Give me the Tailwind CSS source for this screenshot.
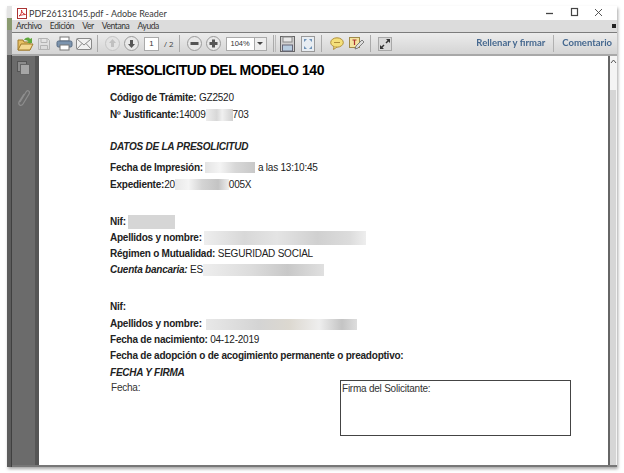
<!DOCTYPE html>
<html lang="es">
<head>
    <meta charset="UTF-8">
    <title>PDF26131045.pdf - Adobe Reader</title>
    <script src="https://cdn.jsdelivr.net/npm/@tailwindcss/browser@4"></script>
</head>
<body class="bg-white w-[624px] h-[473px] overflow-hidden font-['Liberation_Sans',Arial,sans-serif]">
    <div class="pt-[6px] pl-[7px]">
        <div class="w-[610px] h-[461px] flex shadow-[1px_2px_3px_rgba(0,0,0,0.35)] blur-[0.3px]">
            <!-- strip of the window behind -->
            <div class="w-[5px] flex flex-col">
                <div class="h-[12px] bg-[#e4e4e4]"></div>
                <div class="h-[12px] bg-[#8a9a70]"></div>
                <div class="h-[25px] bg-[#9a9a9a]"></div>
                <div class="flex-1 bg-[#5c5c5c] border-r border-[#404040]"></div>
            </div>

            <div class="flex-1 flex flex-col min-w-0">
                <!-- title bar -->
                <div class="h-[14px] bg-white flex items-center">
                    <svg class="ml-[5px]" width="10" height="11" viewBox="0 0 10 11"><rect x="0.5" y="0.5" width="9" height="10" fill="#fff" stroke="#a33"/><path d="M2 8c2-1 3-4 2.500-6 0 2 2 4 4 4.500-2 0-4.500.5-6.500 1.500z" fill="none" stroke="#c22" stroke-width="0.9"/></svg>
                    <span class="ml-[2px] text-[9px] leading-none text-[#3a3a3a] font-['Lato',sans-serif]">PDF26131045.pdf - Adobe Reader</span>
                    <svg class="ml-auto mr-[12px]" width="60" height="12" viewBox="0 0 60 12" fill="none" stroke="#444"><path d="M1 6.500h7" stroke-width="1.300"/><rect x="26.500" y="1.500" width="6" height="7" stroke-width="1.200"/><path d="M50 2l7 7M57 2l-7 7" stroke-width="0.900"/></svg>
                </div>
                <!-- menu bar -->
                <div class="h-[12px] bg-[#dcdcdc] flex items-center pl-[4px] gap-[8px] text-[8.500px] tracking-[-0.4px] leading-none text-[#333] font-['Lato',sans-serif] relative">
                    <span>Archivo</span><span>Edición</span><span>Ver</span><span>Ventana</span><span>Ayuda</span>
                    <span class="absolute right-[1px] top-[4px] w-[4px] h-[4px] bg-[#222]"></span>
                </div>
                <!-- toolbar -->
                <div class="h-[24px] flex items-center border-t border-[#7c7c7c] border-b-2 border-b-[#a8a8a8] bg-[linear-gradient(#ececec,#d4d4d4)]">
                    <svg class="ml-[5px]" width="17" height="16" viewBox="0 0 17 16"><path d="M1 4h5l1 2h6v8H1z" fill="#e8c064" stroke="#a07a2a"/><path d="M1 14l3-6h12l-3 6z" fill="#f4d890" stroke="#a07a2a"/><path d="M7 4c2-3 5-3 6-1l2-1v5h-5l1.500-1.500c-1-1.500-3-1.500-4.500-1.500z" fill="#5fa83c"/></svg>
                    <svg class="ml-[3px]" width="14" height="14" viewBox="0 0 14 14" fill="none" stroke="#b4b4b4"><path d="M1.500 1.500h9l2 2v9h-11z"/><path d="M4 1.500v4h6v-4M3.500 12.500v-4h7v4"/></svg>
                    <svg class="ml-[5px]" width="17" height="15" viewBox="0 0 17 15"><rect x="4" y="1" width="9" height="4" fill="#fff" stroke="#777"/><rect x="1" y="5" width="15" height="6" rx="1.500" fill="#7c94ae" stroke="#566a82"/><rect x="4" y="9" width="9" height="5" fill="#fff" stroke="#777"/></svg>
                    <svg class="ml-[3px]" width="16" height="12" viewBox="0 0 16 12" fill="#f2f2f2" stroke="#8a8a8a"><rect x="0.500" y="0.500" width="15" height="11" rx="1"/><path d="M1 1l7 6 7-6M1 11l5-5.500M15 11l-5-5.500" fill="none"/></svg>
                    <span class="ml-[5px] w-px h-[17px] bg-[#aaa]"></span>
                    <svg class="ml-[7px]" width="15" height="15" viewBox="0 0 15 15"><circle cx="7.500" cy="7.500" r="7" fill="#e2e2e2" stroke="#c4c4c4"/><path d="M7.500 3l3.500 4H9v4H6V7H4z" fill="#c0c0c0"/></svg>
                    <svg class="ml-[4px]" width="15" height="15" viewBox="0 0 15 15"><circle cx="7.500" cy="7.500" r="7" fill="#e8e8e8" stroke="#9a9a9a"/><path d="M7.500 12L4 8h2V4h3v4h2z" fill="#555"/></svg>
                    <span class="ml-[5px] w-[15px] h-[14px] bg-white border border-[#aaa] text-[8px] leading-[12px] text-center text-[#333]">1</span>
                    <span class="ml-[5px] text-[8px] text-[#444] font-['Open_Sans',sans-serif]">/ 2</span>
                    <span class="ml-[5px] w-px h-[17px] bg-[#aaa]"></span>
                    <svg class="ml-[7px]" width="15" height="15" viewBox="0 0 15 15"><circle cx="7.500" cy="7.500" r="7" fill="#e8e8e8" stroke="#9a9a9a"/><rect x="3.500" y="6" width="8" height="3" fill="#555"/></svg>
                    <svg class="ml-[4px]" width="15" height="15" viewBox="0 0 15 15"><circle cx="7.500" cy="7.500" r="7" fill="#e8e8e8" stroke="#9a9a9a"/><path d="M3.500 6H6V3.500h3V6h2.500v3H9v2.500H6V9H3.500z" fill="#555"/></svg>
                    <div class="ml-[5px] w-[41px] h-[14px] flex border border-[#aaa]">
                        <span class="w-[27px] bg-white text-[7.500px] leading-[12px] text-center text-[#333]">104%</span>
                        <span class="flex-1 border-l border-[#aaa] bg-[#eee] flex items-center justify-center"><span class="border-x-[3px] border-x-transparent border-t-[3px] border-t-[#444]"></span></span>
                    </div>
                    <span class="ml-[6px] w-px h-[17px] bg-[#aaa]"></span>
                    <span class="ml-[1px] w-px h-[17px] bg-[#bbb]"></span>
                    <svg class="ml-[4px]" width="15" height="16" viewBox="0 0 15 16"><rect x="0.500" y="0.500" width="14" height="15" fill="#cfcfcf" stroke="#666"/><rect x="3" y="1" width="9" height="5" fill="#e8e8e8" stroke="#888"/><rect x="2.500" y="9" width="10" height="6" fill="#b8cde0" stroke="#667"/></svg>
                    <svg class="ml-[6px]" width="14" height="16" viewBox="0 0 14 16"><rect x="0.500" y="0.500" width="13" height="15" fill="#e8edf2" stroke="#999"/><path d="M3 3h3L3 6zM11 3H8l3 3zM3 13h3l-3-3zM11 13H8l3-3z" fill="#6f93b8"/></svg>
                    <span class="ml-[6px] w-px h-[17px] bg-[#aaa]"></span>
                    <svg class="ml-[8px]" width="14" height="13" viewBox="0 0 14 13"><ellipse cx="7" cy="5.500" rx="6.300" ry="4.700" fill="#f4e07a" stroke="#b08f3a"/><path d="M4 9.500l-.5 3 3.500-2.500" fill="#f4e07a" stroke="#b08f3a"/><path d="M4 5.500h6" stroke="#b08f3a"/></svg>
                    <svg class="ml-[5px]" width="15" height="14" viewBox="0 0 15 14"><rect x="0.500" y="0.500" width="10" height="10" fill="#f4e4a0" stroke="#a08a4a"/><path d="M3.500 3h4M5.500 3v5" stroke="#a33" stroke-width="1.200"/><path d="M6 12l1-3 6-6 2 2-6 6z" fill="#ddd" stroke="#666" stroke-width="0.800"/></svg>
                    <span class="ml-[6px] w-px h-[17px] bg-[#aaa]"></span>
                    <span class="ml-[7px] w-[14px] h-[14px] bg-[#d8d8d8] border border-[#a8a8a8] flex items-center justify-center">
                        <svg width="12" height="12" viewBox="0 0 12 12" fill="#333"><path d="M7 1h4v4L9.500 3.500 7.500 5.500 6.500 4.500 8.500 2.500zM5 11H1V7l1.500 1.500 2-2 1 1-2 2z"/></svg>
                    </span>
                    <span class="ml-auto text-[9.500px] font-bold text-[#45688f] font-['Lato',sans-serif] whitespace-nowrap">Rellenar y firmar</span>
                    <span class="ml-[8px] w-px h-[17px] bg-[#b0b0b0]"></span>
                    <span class="ml-[8px] mr-[5px] text-[9.500px] font-bold text-[#45688f] font-['Lato',sans-serif]">Comentario</span>
                </div>

                <div class="flex-1 flex min-h-0">
                    <!-- left navigation panel -->
                    <div class="w-[23px] bg-[#6b6b6b] flex flex-col items-center pt-[5px] gap-[13px]">
                        <svg width="13" height="14" viewBox="0 0 13 14"><rect x="0.500" y="0.500" width="9" height="10" fill="#8c8c8c" stroke="#555"/><rect x="3.500" y="3.500" width="9" height="10" fill="#a6a6a6" stroke="#666"/></svg>
                        <svg width="14" height="20" viewBox="0 0 14 20" fill="none" stroke="#8e8e8e" stroke-width="1.200"><path d="M3 14L9 4c1.500-2.500 4.500-1 3 2L6 16c-1.500 2.500-5 1.500-4-2L7 6"/></svg>
                    </div>
                    <div class="w-[4px] bg-[#555]"></div>

                    <!-- document page -->
                    <div class="flex-1 bg-white pl-[68px] text-[10px] tracking-[-0.23px] leading-[16px] text-[#222] min-w-0">
                        <h1 class="mt-[6px] h-[16px] text-[14px] tracking-[-0.42px] leading-[16px] font-bold text-black whitespace-nowrap">PRESOLICITUD DEL MODELO 140</h1>
                        <div class="pl-[3px] font-bold whitespace-nowrap">
                            <p class="mt-[12px]">Código de Trámite: <span class="font-normal">GZ2520</span></p>
                            <p class="mt-[1px] flex"><span>Nº Justificante:</span><span class="font-normal">14009</span><span class="mt-[2px] w-[27px] h-[12px] bg-[linear-gradient(90deg,#eee,#d8d8d8_40%,#f0f0f0_60%,#d0d0d0)]"></span><span class="font-normal">703</span></p>
                            <p class="mt-[16px] italic">DATOS DE LA PRESOLICITUD</p>
                            <p class="mt-[5px] flex"><span>Fecha de Impresión:&nbsp;</span><span class="mt-[2px] w-[50px] h-[11px] bg-[linear-gradient(90deg,#e4e4e4,#f4f4f4_30%,#d8d8d8_60%,#c8c8c8)]"></span><span class="font-normal">&nbsp;a las 13:10:45</span></p>
                            <p class="mt-[1px] flex"><span>Expediente:</span><span class="font-normal">20</span><span class="mt-[2px] w-[54px] h-[11px] bg-[linear-gradient(90deg,#e8e8e8,#f4f4f4_25%,#d4d4d4_50%,#c4c4c4_80%,#eee)]"></span><span class="font-normal">005X</span></p>
                            <p class="mt-[21px] flex"><span>Nif:&nbsp;</span><span class="mt-[1px] w-[47px] h-[14px] bg-[#d6d6d6]"></span></p>
                            <p class="flex"><span>Apellidos y nombre:&nbsp;</span><span class="mt-[1px] w-[162px] h-[14px] bg-[linear-gradient(90deg,#eee,#d8d8d8_25%,#e4e4e4_45%,#d0d0d0_70%,#dcdcdc_90%,#eee)]"></span></p>
                            <p>Régimen o Mutualidad: <span class="font-normal">SEGURIDAD SOCIAL</span></p>
                            <p class="flex"><span class="italic">Cuenta bancaria:&nbsp;</span><span class="font-normal">ES</span><span class="mt-[2px] w-[121px] h-[12px] bg-[linear-gradient(90deg,#eee,#dcdcdc_40%,#c8c8c8_70%,#e0e0e0)]"></span></p>
                            <p class="mt-[21px]">Nif:</p>
                            <p class="mt-[1px] flex"><span>Apellidos y nombre:&nbsp;</span><span class="ml-[2px] mt-[3px] w-[151px] h-[11px] bg-[linear-gradient(90deg,#e8e8e8,#d4d4d4_35%,#dcd8d0_55%,#eee_75%,#c4c4c4_90%,#ddd)]"></span></p>
                            <p>Fecha de nacimiento: <span class="font-normal">04-12-2019</span></p>
                            <p>Fecha de adopción o de acogimiento permanente o preadoptivo:</p>
                            <p class="mt-[1px] italic">FECHA Y FIRMA</p>
                        </div>
                        <div class="flex mt-[-1px] pl-[4px] font-normal text-[#333]">
                            <span class="w-[229px] shrink-0">Fecha:</span>
                            <div class="w-[231px] h-[56px] border border-[#444] px-[1px] leading-[15px] text-[#333]">Firma del Solicitante:</div>
                        </div>
                    </div>

                    <div class="w-[2px] bg-[#666]"></div>
                    <!-- scrollbar -->
                    <div class="w-[7px] bg-[#f4f4f4] flex flex-col">
                        <svg class="mt-[2px]" width="7" height="6" viewBox="0 0 7 6" fill="none" stroke="#555"><path d="M1 5l2.500-3L6 5"/></svg>
                        <div class="mt-[26px] flex-1 mr-[1px] bg-[#d6d6d6]"></div>
                    </div>
                </div>
                <div class="h-[2px] bg-[#777]"></div>
            </div>
        </div>
    </div>
</body>
</html>
